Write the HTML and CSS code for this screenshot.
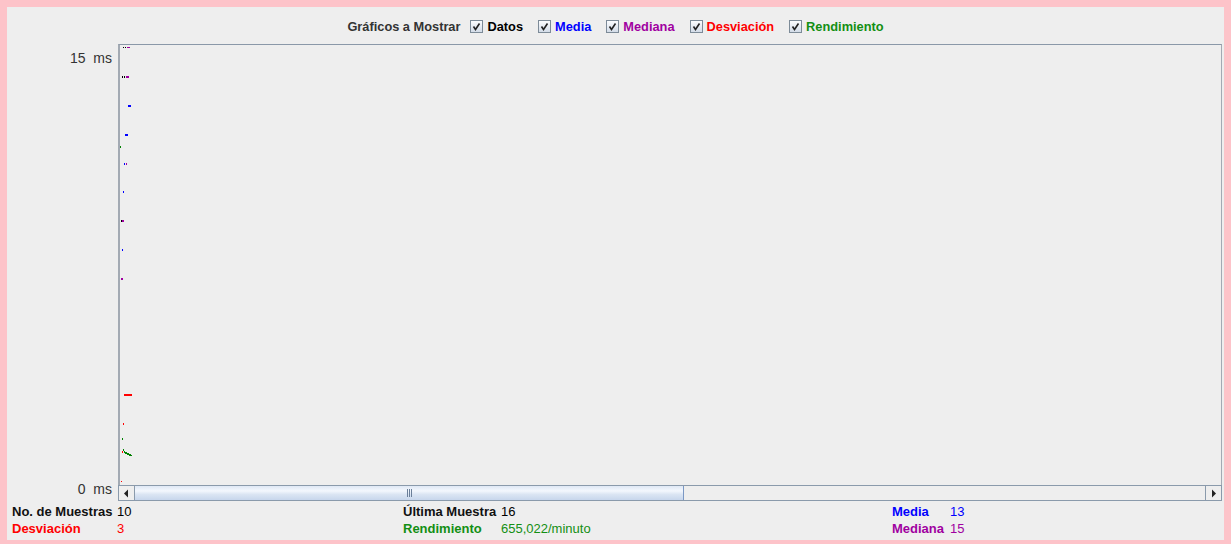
FILE: index.html
```html
<!DOCTYPE html>
<html lang="es">
<head>
<meta charset="utf-8">
<title>Gráficos</title>
<link rel="stylesheet" href="styles.css">
</head>
<body>
<div class="frame">
  <div class="panel">
    <div class="legend">
      <span class="legend-title">Gráficos a Mostrar</span>
      <span class="item"><span class="cb"><svg width="13" height="13" viewBox="0 0 13 13"><path d="M3.5 6.5 L5.5 9.5 L9.5 3.5" fill="none" stroke="#222" stroke-width="1.6"/></svg></span><span class="c-black">Datos</span></span>
      <span class="item"><span class="cb"><svg width="13" height="13" viewBox="0 0 13 13"><path d="M3.5 6.5 L5.5 9.5 L9.5 3.5" fill="none" stroke="#222" stroke-width="1.6"/></svg></span><span class="c-blue">Media</span></span>
      <span class="item"><span class="cb"><svg width="13" height="13" viewBox="0 0 13 13"><path d="M3.5 6.5 L5.5 9.5 L9.5 3.5" fill="none" stroke="#222" stroke-width="1.6"/></svg></span><span class="c-purple">Mediana</span></span>
      <span class="item"><span class="cb"><svg width="13" height="13" viewBox="0 0 13 13"><path d="M3.5 6.5 L5.5 9.5 L9.5 3.5" fill="none" stroke="#222" stroke-width="1.6"/></svg></span><span class="c-red">Desviación</span></span>
      <span class="item"><span class="cb"><svg width="13" height="13" viewBox="0 0 13 13"><path d="M3.5 6.5 L5.5 9.5 L9.5 3.5" fill="none" stroke="#222" stroke-width="1.6"/></svg></span><span class="c-green">Rendimiento</span></span>
    </div>
    <div class="main">
      <div class="yaxis">
        <span class="ylabel">15  ms</span>
        <span class="ylabel">0  ms</span>
      </div>
      <div class="chart-col">
        <div class="plot">
          <svg class="points" width="1102" height="440" viewBox="0 0 1102 440">
            <g transform="translate(-120,-45)">
              <rect x="123" y="47" width="1" height="1" fill="#000"/>
              <rect x="125" y="47" width="1" height="1" fill="#000"/>
              <rect x="127" y="47" width="3" height="1" fill="#a000a0"/>
              <rect x="122" y="76" width="1" height="2" fill="#000"/>
              <rect x="124" y="76" width="1" height="2" fill="#000"/>
              <rect x="126" y="76" width="3" height="2" fill="#a000a0"/>
              <rect x="128" y="105" width="3" height="2" fill="#0000ff"/>
              <rect x="125" y="134" width="3" height="2" fill="#0000ff"/>
              <rect x="120" y="146" width="1" height="2" fill="#008000"/>
              <rect x="124" y="163" width="1" height="2" fill="#0000ff"/>
              <rect x="126" y="163" width="1" height="2" fill="#a000a0"/>
              <rect x="123" y="191" width="1" height="2" fill="#0000ff"/>
              <rect x="121" y="220" width="1" height="2" fill="#000"/>
              <rect x="122" y="220" width="2" height="2" fill="#a000a0"/>
              <rect x="122" y="249" width="1" height="2" fill="#0000ff"/>
              <rect x="121" y="278" width="2" height="2" fill="#a000a0"/>
              <rect x="124" y="394" width="8" height="2" fill="#ff0000"/>
              <rect x="123" y="423" width="1" height="2" fill="#ff0000"/>
              <rect x="122" y="438" width="1" height="2" fill="#008000"/>
              <rect x="122" y="451" width="1" height="2" fill="#ff0000"/>
              <rect x="123" y="449" width="1" height="2" fill="#008000"/>
              <rect x="124" y="451" width="1" height="2" fill="#008000"/>
              <rect x="125" y="452" width="2" height="2" fill="#008000"/>
              <rect x="127" y="453" width="2" height="2" fill="#008000"/>
              <rect x="129" y="454" width="2" height="2" fill="#008000"/>
              <rect x="131" y="455" width="1" height="1" fill="#008000"/>
              <rect x="121" y="481" width="1" height="1" fill="#ff0000"/>
            </g>
          </svg>
        </div>
        <div class="scrollbar">
          <div class="sb-btn"><svg width="7" height="9" viewBox="0 0 7 9"><path d="M5 0.5 L1 4.5 L5 8.5 Z" fill="#222"/></svg></div>
          <div class="sb-track">
            <div class="sb-thumb">
              <span class="grip"></span>
            </div>
          </div>
          <div class="sb-btn"><svg width="7" height="9" viewBox="0 0 7 9"><path d="M2 0.5 L6 4.5 L2 8.5 Z" fill="#222"/></svg></div>
        </div>
      </div>
    </div>
    <div class="stats">
      <span class="lbl c-black">No. de Muestras</span>
      <span class="val c-black">10</span>
      <span class="lbl c-black">Última Muestra</span>
      <span class="val c-black">16</span>
      <span class="lbl c-blue">Media</span>
      <span class="val c-blue">13</span>

      <span class="lbl c-red">Desviación</span>
      <span class="val c-red">3</span>
      <span class="lbl c-green">Rendimiento</span>
      <span class="val c-green">655,022/minuto</span>
      <span class="lbl c-purple">Mediana</span>
      <span class="val c-purple">15</span>
    </div>
  </div>
</div>
</body>
</html>
```

FILE: styles.css
```css
* { box-sizing: border-box; }
html, body {
  margin: 0;
  padding: 0;
}
body {
  width: 1231px;
  height: 544px;
  overflow: hidden;
  font-family: "Liberation Sans", Arial, sans-serif;
  font-size: 13px;
}
.frame {
  width: 1231px;
  height: 544px;
  padding: 7px 7px 4px 7px;
  background: #fdc3c9;
}
.panel {
  width: 100%;
  height: 100%;
  background: #eeeeee;
  display: flex;
  flex-direction: column;
}
.legend {
  height: 37px;
  padding-top: 1px;
  display: flex;
  align-items: center;
  justify-content: center;
  font-weight: bold;
  font-size: 12.8px;
}
.legend-title {
  color: #333333;
  margin-right: 10px;
}
.item {
  display: flex;
  align-items: center;
  gap: 4px;
  margin-right: 15px;
}
.item:last-child { margin-right: 0; }
.cb {
  width: 13px;
  height: 13px;
  border: 1px solid #7d8b98;
  background: linear-gradient(#fbfcfe, #d3dce8);
  display: flex;
  align-items: center;
  justify-content: center;
  position: relative;
}
.cb svg {
  position: absolute;
  left: -1px;
  top: -1px;
}
.c-black { color: #000000; }
.c-blue { color: #0000ff; }
.c-purple { color: #a000a0; }
.c-red { color: #ff0000; }
.c-green { color: #138f13; }

.main {
  display: flex;
  height: 457px;
  padding-right: 2px;
}
.yaxis {
  width: 111px;
  flex: none;
  display: flex;
  flex-direction: column;
  justify-content: space-between;
  align-items: flex-end;
  padding: 6px 6px 4px 0;
  color: #333333;
  font-size: 14px;
  line-height: 16px;
}
.ylabel { white-space: pre; }
.chart-col {
  flex: 1;
  display: flex;
  flex-direction: column;
}
.plot {
  flex: 1;
  position: relative;
  border-left: 2px solid #a3aab3;
  border-top: 1px solid #8a98a8;
  border-right: 1px solid #a3aab3;
  background: #eeeeee;
  overflow: hidden;
}
.points {
  position: absolute;
  left: 0;
  top: 0;
}
.scrollbar {
  height: 16px;
  display: flex;
  border: 1px solid #8a9aab;
  background: #eeeeee;
}
.sb-btn {
  width: 16px;
  flex: none;
  display: flex;
  align-items: center;
  justify-content: center;
  background: #eeeeee;
}
.sb-btn:first-child { border-right: 1px solid #8a9aab; }
.sb-btn:last-child { border-left: 1px solid #8a9aab; }
.sb-track {
  flex: 1;
  display: flex;
}
.sb-thumb {
  width: 549px;
  height: 100%;
  border-right: 1px solid #7b98c4;
  background: linear-gradient(#dfe8f5 0%, #f3f7fd 35%, #dbe5f3 60%, #c7d6ec 100%);
  display: flex;
  align-items: center;
  justify-content: center;
}
.grip {
  width: 5px;
  height: 8px;
  background: repeating-linear-gradient(90deg, #6b7f99 0 1px, transparent 1px 2px);
}

.stats {
  flex: 1;
  display: grid;
  grid-template-columns: 105px 286px 98px 391px 58px auto;
  grid-auto-rows: 17px;
  padding: 2px 0 0 5px;
  align-items: center;
  font-size: 13px;
}
.lbl { font-weight: bold; }
.val { font-weight: normal; }
.stats .lbl.c-black { color: #111111; }
```
